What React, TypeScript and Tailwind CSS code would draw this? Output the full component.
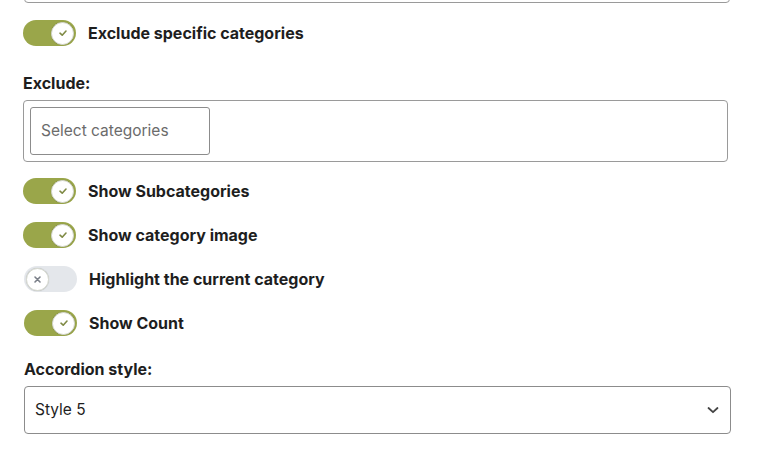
import React from "react";

function Toggle({ on, label, ml = 0 }: { on: boolean; label: string; ml?: number }) {
  return (
    <div className={`flex items-center gap-[12px] ${ml ? "ml-[1px]" : ""}`}>
      <div
        className={`relative flex h-[26px] w-[53px] shrink-0 items-center rounded-full px-[2px] ${
          on ? "justify-end bg-[#9aa64a]" : "justify-start bg-[#e4e7eb]"
        }`}
      >
        <div className="flex h-[23px] w-[23px] items-center justify-center rounded-full border border-[#d6d9cf] bg-white shadow-[0_0_1px_rgba(0,0,0,0.2)]">
          {on ? (
            <svg width="10" height="10" viewBox="0 0 10 10" fill="none">
              <path d="M2 5.2 L4.2 7.2 L8 3" stroke="#7f8a45" strokeWidth="1.6" strokeLinecap="round" strokeLinejoin="round" />
            </svg>
          ) : (
            <svg width="9" height="9" viewBox="0 0 9 9" fill="none">
              <path d="M2 2 L7 7 M7 2 L2 7" stroke="#7a7f88" strokeWidth="1.6" strokeLinecap="round" />
            </svg>
          )}
        </div>
      </div>
      <span className="text-[16px] font-bold leading-[20px] text-[#1e1e1e]">{label}</span>
    </div>
  );
}

export default function App() {
  return (
    <div
      className="h-[452px] w-[769px] overflow-hidden bg-white pl-[23px]"
      style={{ fontFamily: "Inter, 'Liberation Sans', Arial, sans-serif" }}
    >
      <div className="mt-[-27px] ml-[1px] h-[30px] w-[706px] rounded-[4px] border border-[#9a9a9a]" />
      <div className="mt-[17px]">
        <Toggle on label="Exclude specific categories" />
      </div>
      <div className="mt-[27px] text-[16px] font-bold leading-[20px] text-[#1e1e1e]">Exclude:</div>
      <div className="mt-[7px] h-[62px] w-[705px] rounded-[4px] border border-[#9a9a9a] p-[6px]">
        <div className="flex h-[48px] w-[180px] items-center rounded-[3px] border border-[#8c8c8c] px-[10px] text-[15.5px] text-[#6b6b6b]">
          Select categories
        </div>
      </div>
      <div className="mt-[16px] flex flex-col gap-[18px]">
        <Toggle on label="Show Subcategories" />
        <Toggle on label="Show category image" />
        <Toggle on={false} label="Highlight the current category" ml={1} />
        <Toggle on label="Show Count" ml={1} />
      </div>
      <div className="ml-[1px] mt-[23px] text-[16px] font-bold leading-[20px] text-[#1e1e1e]">Accordion style:</div>
      <div className="ml-[1px] mt-[7px] flex h-[48px] w-[707px] items-center justify-between rounded-[4px] border border-[#8c8c8c] pl-[10px] pr-[10px] text-[15.5px] text-[#1e1e1e]">
        <span>Style 5</span>
        <svg width="14" height="14" viewBox="0 0 14 14" fill="none">
          <path d="M2.5 5 L7 9.2 L11.5 5" stroke="#444" strokeWidth="1.8" strokeLinecap="round" strokeLinejoin="round" />
        </svg>
      </div>
    </div>
  );
}
